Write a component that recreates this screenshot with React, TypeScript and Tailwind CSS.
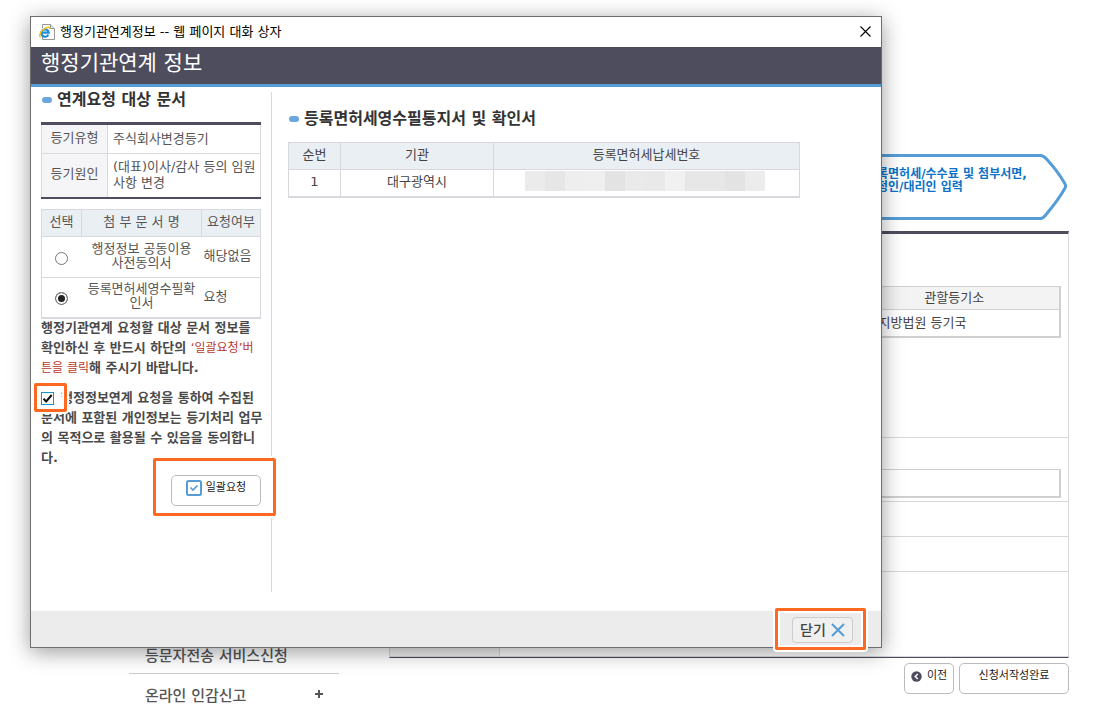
import React, { useState } from "react";

interface HighlightProps {
  className: string;
}

const Highlight = ({ className }: HighlightProps) => (
  <span
    aria-hidden="true"
    className={`pointer-events-none absolute z-10 rounded-[2px] border-[3px] border-[#ff6820] shadow-[0_0_0_2px_#fff,inset_0_0_0_2px_#fff] ${className}`}
  />
);

const ExplorerIcon = () => (
  <svg width="16" height="16" viewBox="0 0 16 16" fill="none" aria-hidden="true">
    <path d="M3.5.5h8l4 4v11h-12z" fill="#fafafa" stroke="#979797" />
    <path d="M11.5.5v4h4" fill="#e4e4e4" stroke="#979797" />
    <circle cx="6" cy="8.500" r="5" fill="#fafafa" />
    <path
      d="M9.300 10.800A3.700 3.700 0 1 1 9.700 8.600H3"
      stroke="#1f8fe0"
      strokeWidth="2.200"
    />
    <path
      d="M1.600 13.400C-.4 12 1.200 7.600 5.200 4.900 8.500 2.700 11 2.800 10.600 5"
      stroke="#f2c11c"
      strokeWidth="1.400"
    />
  </svg>
);

const SectionTitle = ({ children }: { children: React.ReactNode }) => (
  <h2 className="flex items-center gap-[5px] whitespace-nowrap text-base leading-6 font-bold text-[#333]">
    <span className="ml-px h-[6px] w-[10px] rounded-full bg-[#69a7dc]" />
    {children}
  </h2>
);

const MOSAIC = [
  "#ebebeb",
  "#e6e6e6",
  "#eeeeee",
  "#efefef",
  "#e3e3e3",
  "#eaeaea",
  "#e9e9e9",
  "#f1f1f1",
  "#e7e7e7",
  "#e7e7e7",
  "#e3e3e3",
  "#ececec",
];

const Sidebar = () => (
  <nav className="w-[210px] shrink-0 pt-[640px] text-[15px] font-medium text-[#555]">
    <a
      href="#sms"
      className="flex h-[34px] items-center border-b border-[#ccc] px-4"
    >
      등문자전송 서비스신청
    </a>
    <a href="#seal" className="flex h-[44px] items-center justify-between px-4">
      온라인 인감신고
      <svg width="8" height="8" viewBox="0 0 8 8" className="-mt-1">
        <path d="M4 0v8M0 4h8" stroke="#555" strokeWidth="2" />
      </svg>
    </a>
  </nav>
);

const StepArrow = () => (
  <div className="flex h-[66px]">
    <div className="flex flex-1 justify-end border-y-[3px] border-[#569cd6] pt-[11px]">
      <p className="w-[161px] whitespace-nowrap text-xs leading-[13px] font-bold text-[#0b72c7]">
        등록면허세/수수료 및 첨부서면,
        <br />
        신청인/대리인 입력
      </p>
    </div>
    <svg width="42" height="66" viewBox="0 0 42 66" fill="none">
      <path
        d="M0 1.5h13.500c2.500 0 4.200 1.500 6 3.500C27 13 34 23 37.800 29.500c1.200 2 1.200 3 0 5C33 43 27 51 19.500 60c-1.800 2.500-3.500 4.500-6 4.500H0"
        stroke="#569cd6"
        strokeWidth="3"
      />
    </svg>
  </div>
);

const FormRow = ({
  className,
  children,
}: {
  className: string;
  children?: React.ReactNode;
}) => (
  <div className={`flex ${className}`}>
    <div className="w-[110px] shrink-0 border-r border-[#d8d8dc] bg-[#f3f3f3]" />
    <div className="flex-1 pr-[7px] pl-2">{children}</div>
  </div>
);

const Background = () => (
  <div className="flex pr-[45px] pl-[129px]">
    <Sidebar />
    <main className="ml-[50px] flex-1 pt-[154px]">
      <StepArrow />
      <section className="mt-[11px] border-x border-t-[3px] border-b border-x-[#d8d8dc] border-t-[#4e4c5e] border-b-[#4e4c5e]">
        <FormRow className="h-[204px] border-b border-[#d8d8dc]">
          <table className="mt-[52px] w-full table-fixed border border-r-2 border-b-2 border-[#d0d0d0] text-[13px] text-[#444]">
            <thead>
              <tr className="h-[23px] border-b border-[#d0d0d0] bg-[#f3f3f3]">
                <th className="w-[341px]" />
                <th className="font-normal">관할등기소</th>
              </tr>
            </thead>
            <tbody>
              <tr className="h-[27px]">
                <td />
                <td className="pl-[29px] leading-5">지방법원 등기국</td>
              </tr>
            </tbody>
          </table>
        </FormRow>
        <FormRow className="h-[64px] border-b border-[#d8d8dc]">
          <input
            aria-label="입력"
            className="mt-[31px] h-[29px] w-full border border-r-2 border-b-2 border-[#d0d0d0]"
          />
        </FormRow>
        <FormRow className="h-[35px] border-b border-[#d8d8dc]" />
        <FormRow className="h-[35px] border-b border-[#d8d8dc]" />
        <FormRow className="h-[85px] border-b border-[#d8d8dc]" />
      </section>
      <div className="mt-[5px] flex justify-end gap-[5px] text-[11px] text-[#222]">
        <button
          type="button"
          className="flex h-[31px] w-[50px] items-center justify-center gap-[5px] rounded-[5px] border border-[#bbb] bg-white pb-[4px] whitespace-nowrap"
        >
          <svg width="11" height="11" viewBox="0 0 11 11">
            <circle cx="5.500" cy="5.500" r="5.200" fill="#4e4c5e" />
            <path d="M6.800 3 4.200 5.500 6.800 8" stroke="#fff" strokeWidth="1.500" fill="none" />
          </svg>
          이전
        </button>
        <button
          type="button"
          className="flex h-[31px] w-[110px] items-center justify-center rounded-[5px] border border-[#bbb] bg-white pb-[4px]"
        >
          신청서작성완료
        </button>
      </div>
    </main>
  </div>
);

interface DocumentRowProps {
  id: string;
  name: React.ReactNode;
  status: string;
  checked: boolean;
  onChange: () => void;
}

const DocumentRow = ({
  id,
  name,
  status,
  checked,
  onChange,
}: DocumentRowProps) => (
  <tr className="h-[41px] border-b border-[#d8d8de]">
    <td className="pt-[3px]">
      <input
        type="radio"
        id={id}
        name="document"
        checked={checked}
        onChange={onChange}
        className="mx-auto block size-[13px] appearance-none rounded-full border border-[#777] bg-white checked:bg-[#222] checked:shadow-[inset_0_0_0_2px_#fff]"
      />
    </td>
    <td className="pb-[2px] text-center leading-[14px] whitespace-nowrap">
      <label htmlFor={id}>{name}</label>
    </td>
    <td className="pb-[2px] pl-[2px] whitespace-nowrap">{status}</td>
  </tr>
);

const RequestPanel = () => {
  const [selected, setSelected] = useState("certificate");
  const [agreed, setAgreed] = useState(true);

  return (
    <div className="mt-[5px] h-[500px] w-[241px] shrink-0 border-r border-[#d8d8de] pr-[10px] pl-[10px] text-[13px] text-[#555]">
      <div className="-mt-1">
        <SectionTitle>연계요청 대상 문서</SectionTitle>
      </div>
      <table className="mt-[10px] w-full table-fixed border-x border-t-[3px] border-b-2 border-x-[#d8d8de] border-t-[#4e4c5e] border-b-[#4e4c5e]">
        <tbody>
          <tr className="h-[30px] border-b border-[#d8d8de]">
            <th className="w-[66px] border-r border-[#d8d8de] bg-[#f5f5f8] pb-[3px] font-normal">
              등기유형
            </th>
            <td className="pl-[5px]">주식회사변경등기</td>
          </tr>
          <tr className="h-[44px]">
            <th className="border-r border-[#d8d8de] bg-[#f5f5f8] pb-[3px] font-normal">
              등기원인
            </th>
            <td className="pb-px pl-[5px] leading-4 whitespace-nowrap">
              (대표)이사/감사 등의 임원
              <br />
              사항 변경
            </td>
          </tr>
        </tbody>
      </table>
      <table className="mt-[10px] w-full table-fixed border border-b-2 border-[#d8d8de]">
        <thead>
          <tr className="h-[27px] border-b border-[#d8d8de] bg-[#eaeff4]">
            <th className="w-[40px] border-r border-[#d8d8de] pb-[2px] font-normal">선택</th>
            <th className="border-r border-[#d8d8de] pb-[2px] font-normal">
              첨 부 문 서 명
            </th>
            <th className="w-[59px] pb-[2px] font-normal">요청여부</th>
          </tr>
        </thead>
        <tbody>
          <DocumentRow
            id="consent"
            name={
              <>
                행정정보 공동이용
                <br />
                사전동의서
              </>
            }
            status="해당없음"
            checked={selected === "consent"}
            onChange={() => setSelected("consent")}
          />
          <DocumentRow
            id="certificate"
            name={
              <>
                등록면허세영수필확
                <br />
                인서
              </>
            }
            status="요청"
            checked={selected === "certificate"}
            onChange={() => setSelected("certificate")}
          />
        </tbody>
      </table>
      <p className="-mt-px leading-5 font-bold whitespace-nowrap text-[#4a4a4a]">
        행정기관연계 요청할 대상 문서 정보를
        <br />
        확인하신 후 반드시 하단의{" "}
        <span className="text-xs font-normal text-[#b8392a]">
          ‘일괄요청’버
          <br />
          튼을 클릭
        </span>
        해 주시기 바랍니다.
      </p>
      <label className="mt-[10px] block leading-5 font-bold whitespace-nowrap text-[#4a4a4a]">
        <span className="relative mr-[7px] inline-block size-[13px] align-[-3px]">
          <input
            type="checkbox"
            checked={agreed}
            onChange={() => setAgreed(!agreed)}
            className="block size-[13px] appearance-none border border-[#1f8fdc] bg-white"
          />
          {agreed && (
            <svg
              className="pointer-events-none absolute inset-0 z-20"
              width="13"
              height="13"
              viewBox="0 0 13 13"
              fill="none"
            >
              <path d="M2.500 6.800 5.200 9.500 10.700 3" stroke="#111" strokeWidth="2" />
            </svg>
          )}
          <Highlight className="-top-[9px] -right-[13px] -bottom-[7px] -left-[7px]" />
        </span>
        행정정보연계 요청을 통하여 수집된
        <br />
        문서에 포함된 개인정보는 등기처리 업무
        <br />의 목적으로 활용될 수 있음을 동의합니
        <br />
        다.
      </label>
      <div className="relative mt-[7px] ml-auto w-[90px]">
        <button
          type="button"
          className="flex h-[31px] w-full items-center justify-center gap-1 rounded-[5px] border border-[#bbb] bg-white pb-[5px] text-[11px] whitespace-nowrap text-[#222]"
        >
          <svg width="16" height="16" viewBox="0 0 16 16" fill="none">
            <rect x="1" y="1" width="14" height="14" rx="1.500" stroke="#569cd6" strokeWidth="2" />
            <path d="m4.500 7.500 2.500 2.500 4.500-4.500" stroke="#569cd6" strokeWidth="1.700" />
          </svg>
          일괄요청
        </button>
        <Highlight className="-top-[17px] -right-[15px] -bottom-[10px] -left-[18px]" />
      </div>
    </div>
  );
};

const ResultPanel = () => (
  <div className="flex-1 pt-5 pr-[81px] pl-4 text-[13px] text-[#444]">
    <SectionTitle>등록면허세영수필통지서 및 확인서</SectionTitle>
    <table className="mt-[11px] w-full table-fixed border border-b-2 border-[#d8d8de] text-center">
      <thead>
        <tr className="h-[27px] border-b border-[#d8d8de] bg-[#eaeff4]">
          <th className="w-[52px] border-r border-[#d8d8de] pb-[2px] font-normal">순번</th>
          <th className="w-[153px] border-r border-[#d8d8de] pb-[2px] font-normal">기관</th>
          <th className="pb-[2px] font-normal">등록면허세납세번호</th>
        </tr>
      </thead>
      <tbody>
        <tr className="h-[27px]">
          <td className="border-r border-[#d8d8de] pb-[2px]">1</td>
          <td className="border-r border-[#d8d8de] pb-[2px]">대구광역시</td>
          <td className="pr-1 pb-[4px]">
            <div className="flex justify-center">
              {MOSAIC.map((color, i) => (
                <span key={i} className="size-5" style={{ background: color }} />
              ))}
            </div>
          </td>
        </tr>
      </tbody>
    </table>
  </div>
);

const LinkDialog = () => (
  <div
    role="dialog"
    aria-label="행정기관연계정보"
    className="absolute top-4 right-[232px] left-[30px] border border-[#6e6e6e] bg-white shadow-[0_4px_20px_rgba(0,0,0,0.4)]"
  >
    <div className="flex h-[30px] items-center justify-between pr-[10px] pl-2">
      <span className="flex items-center gap-[5px] text-[13px] text-black">
        <ExplorerIcon />
        행정기관연계정보 -- 웹 페이지 대화 상자
      </span>
      <button type="button" aria-label="창 닫기" className="pb-[2px]">
        <svg width="11" height="11" viewBox="0 0 11 11">
          <path d="m.5.5 10 10m0-10-10 10" stroke="#000" strokeWidth="1.100" />
        </svg>
      </button>
    </div>
    <h1 className="flex h-[40px] items-center border-b-[3px] border-[#569cd6] bg-[#4e4d5e] pb-[3px] pl-[10px] text-[21px] text-white">
      행정기관연계 정보
    </h1>
    <div className="flex h-[524px]">
      <RequestPanel />
      <ResultPanel />
    </div>
    <div className="flex h-[36px] justify-end bg-[#ececec] pt-[6px] pr-7">
      <div className="relative h-[26px] w-[61px]">
        <button
          type="button"
          className="flex size-full items-center justify-center gap-[5px] rounded-[4px] border border-[#ccc] bg-[#f0f0f0] text-sm font-medium whitespace-nowrap text-[#444]"
        >
          닫기
          <svg width="14" height="14" viewBox="0 0 14 14">
            <path d="m1 1 12 12M13 1 1 13" stroke="#569cd6" strokeWidth="2" />
          </svg>
        </button>
        <Highlight className="-top-[9px] -right-[13px] -bottom-[7px] -left-[17px]" />
      </div>
    </div>
  </div>
);

const App = () => (
  <div className="relative min-h-screen overflow-hidden bg-white font-['DejaVu_Sans','Noto_Sans_CJK_KR',sans-serif]">
    <Background />
    <LinkDialog />
  </div>
);

export default App;
